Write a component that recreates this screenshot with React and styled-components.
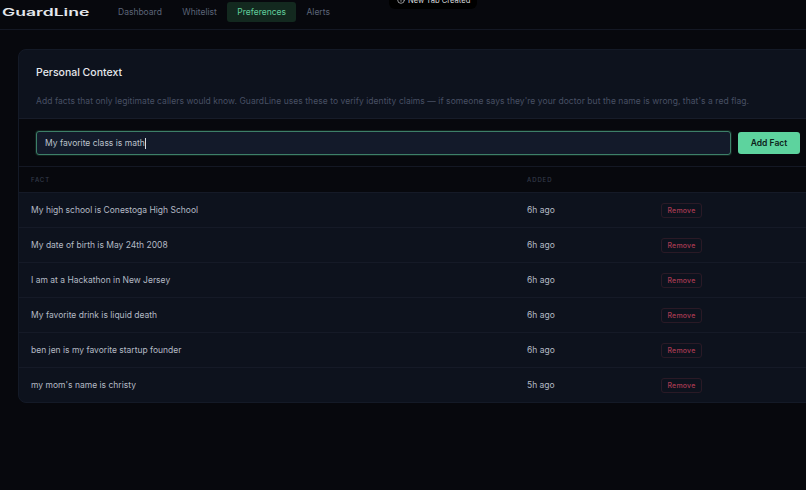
import React from "react";
import styled, { createGlobalStyle } from "styled-components";
import { Info } from "lucide-react";

const GlobalStyle = createGlobalStyle`
  html, body {
    margin: 0;
    padding: 0;
    height: 100%;
    overflow: hidden;
    background: #07080d;
  }
  * { box-sizing: border-box; }
`;

const Page = styled.div`
  position: relative;
  width: 806px;
  height: 490px;
  overflow: hidden;
  background: #07080d;
  font-family: "Inter", "Liberation Sans", sans-serif;
  color: #c5cad3;
`;

const Header = styled.header`
  display: flex;
  align-items: center;
  height: 30px;
  padding: 0 0 6px 2px;
  border-bottom: 1px solid #141824;
`;

const Logo = styled.div`
  width: 88px;
  margin-right: 18px;
  font-family: "Inter", sans-serif;
  font-size: 10px;
  font-weight: 600;
  color: #e4e7ec;
  white-space: nowrap;
  transform: scaleX(1.76);
  transform-origin: left center;
`;

const Nav = styled.nav`
  display: flex;
  gap: 0.5px;
`;

const NavItem = styled.a`
  display: flex;
  align-items: center;
  height: 20px;
  padding: 0 10px;
  border-radius: 3px;
  font-size: 8.5px;
  color: ${(p) => (p.$active ? "#62cf9c" : "#5c6478")};
  background: ${(p) => (p.$active ? "#13291f" : "transparent")};
`;

const Toast = styled.div`
  position: absolute;
  top: -9px;
  left: 389px;
  display: flex;
  align-items: center;
  gap: 3px;
  height: 18px;
  padding: 0 7px 0 8px;
  border-radius: 6px;
  background: #000;
  font-size: 7.6px;
  color: #d8dade;
  white-space: nowrap;
`;

const Content = styled.main`
  padding: 19px 0 0 18px;
`;

const Card = styled.section`
  width: 800px;
  border: 1px solid #141a27;
  border-radius: 8px;
  background: #0d121d;
  overflow: hidden;
`;

const CardHead = styled.div`
  height: 69px;
  padding: 16px 17px 0;
  border-bottom: 1px solid #171c29;
`;

const Title = styled.h2`
  margin: 0 0 15px;
  font-size: 10.5px;
  line-height: 14px;
  font-weight: 500;
  color: #e6e8ec;
`;

const Description = styled.p`
  margin: 0;
  font-size: 8.5px;
  line-height: 12px;
  letter-spacing: 0.055px;
  color: #485064;
  white-space: nowrap;
`;

const AddRow = styled.div`
  display: flex;
  align-items: center;
  gap: 7px;
  height: 48px;
  padding: 1px 0 0 17px;
  background: #07080d;
  border-bottom: 1px solid #141824;
`;

const FactInput = styled.div`
  display: flex;
  align-items: center;
  width: 695px;
  height: 24px;
  padding: 0 8px;
  border: 1px solid #3d7f68;
  border-radius: 3px;
  background: #131a2a;
  box-shadow: 0 0 0 1px rgba(93, 211, 158, 0.12);
  font-size: 8.5px;
  color: #bcc2cc;
`;

const Caret = styled.span`
  width: 1px;
  height: 11px;
  background: #d8dce2;
`;

const AddButton = styled.button`
  width: 62px;
  height: 22px;
  padding: 0;
  border: none;
  border-radius: 3px;
  background: #5dd39e;
  font: 600 8.5px "Inter", "Liberation Sans", sans-serif;
  color: #0c2219;
`;

const Row = styled.div`
  display: grid;
  grid-template-columns: 496px 134px 1fr;
  align-items: center;
  padding-left: 12px;
  height: ${(p) => (p.$head ? "26px" : "35px")};
  background: ${(p) => (p.$head ? "#07080d" : "transparent")};
  border-bottom: 1px solid #151a27;
  &:last-child {
    height: 34px;
    border-bottom: none;
  }
`;

const HeadCell = styled.span`
  font-size: 6px;
  font-weight: 500;
  letter-spacing: 0.9px;
  color: #353c4c;
`;

const Fact = styled.span`
  font-size: 8.5px;
  color: #b4bac5;
`;

const Actions = styled.div`
  display: flex;
  align-items: center;
`;

const RemoveButton = styled.button`
  width: 41px;
  height: 15px;
  padding: 0;
  border: 1px solid #2a1a26;
  border-radius: 3px;
  background: transparent;
  font: 500 7px "Inter", "Liberation Sans", sans-serif;
  letter-spacing: 0.2px;
  color: #a83a52;
`;

const facts = [
  ["My high school is Conestoga High School", "6h ago"],
  ["My date of birth is May 24th 2008", "6h ago"],
  ["I am at a Hackathon in New Jersey", "6h ago"],
  ["My favorite drink is liquid death", "6h ago"],
  ["ben jen is my favorite startup founder", "6h ago"],
  ["my mom's name is christy", "5h ago"],
];

export default function App() {
  return (
    <Page>
      <GlobalStyle />
      <Toast>
        <Info size={8} />
        New Tab Created
      </Toast>
      <Header>
        <Logo>GuardLine</Logo>
        <Nav>
          <NavItem>Dashboard</NavItem>
          <NavItem>Whitelist</NavItem>
          <NavItem $active>Preferences</NavItem>
          <NavItem>Alerts</NavItem>
        </Nav>
      </Header>
      <Content>
        <Card>
          <CardHead>
            <Title>Personal Context</Title>
            <Description>
              Add facts that only legitimate callers would know. GuardLine uses these to verify identity claims — if
              someone says they're your doctor but the name is wrong, that's a red flag.
            </Description>
          </CardHead>
          <AddRow>
            <FactInput>
              My favorite class is math
              <Caret />
            </FactInput>
            <AddButton>Add Fact</AddButton>
          </AddRow>
          <Row $head>
            <HeadCell>FACT</HeadCell>
            <HeadCell>ADDED</HeadCell>
          </Row>
          {facts.map(([text, added]) => (
            <Row key={text}>
              <Fact>{text}</Fact>
              <Fact>{added}</Fact>
              <Actions>
                <RemoveButton>Remove</RemoveButton>
              </Actions>
            </Row>
          ))}
        </Card>
      </Content>
    </Page>
  );
}
